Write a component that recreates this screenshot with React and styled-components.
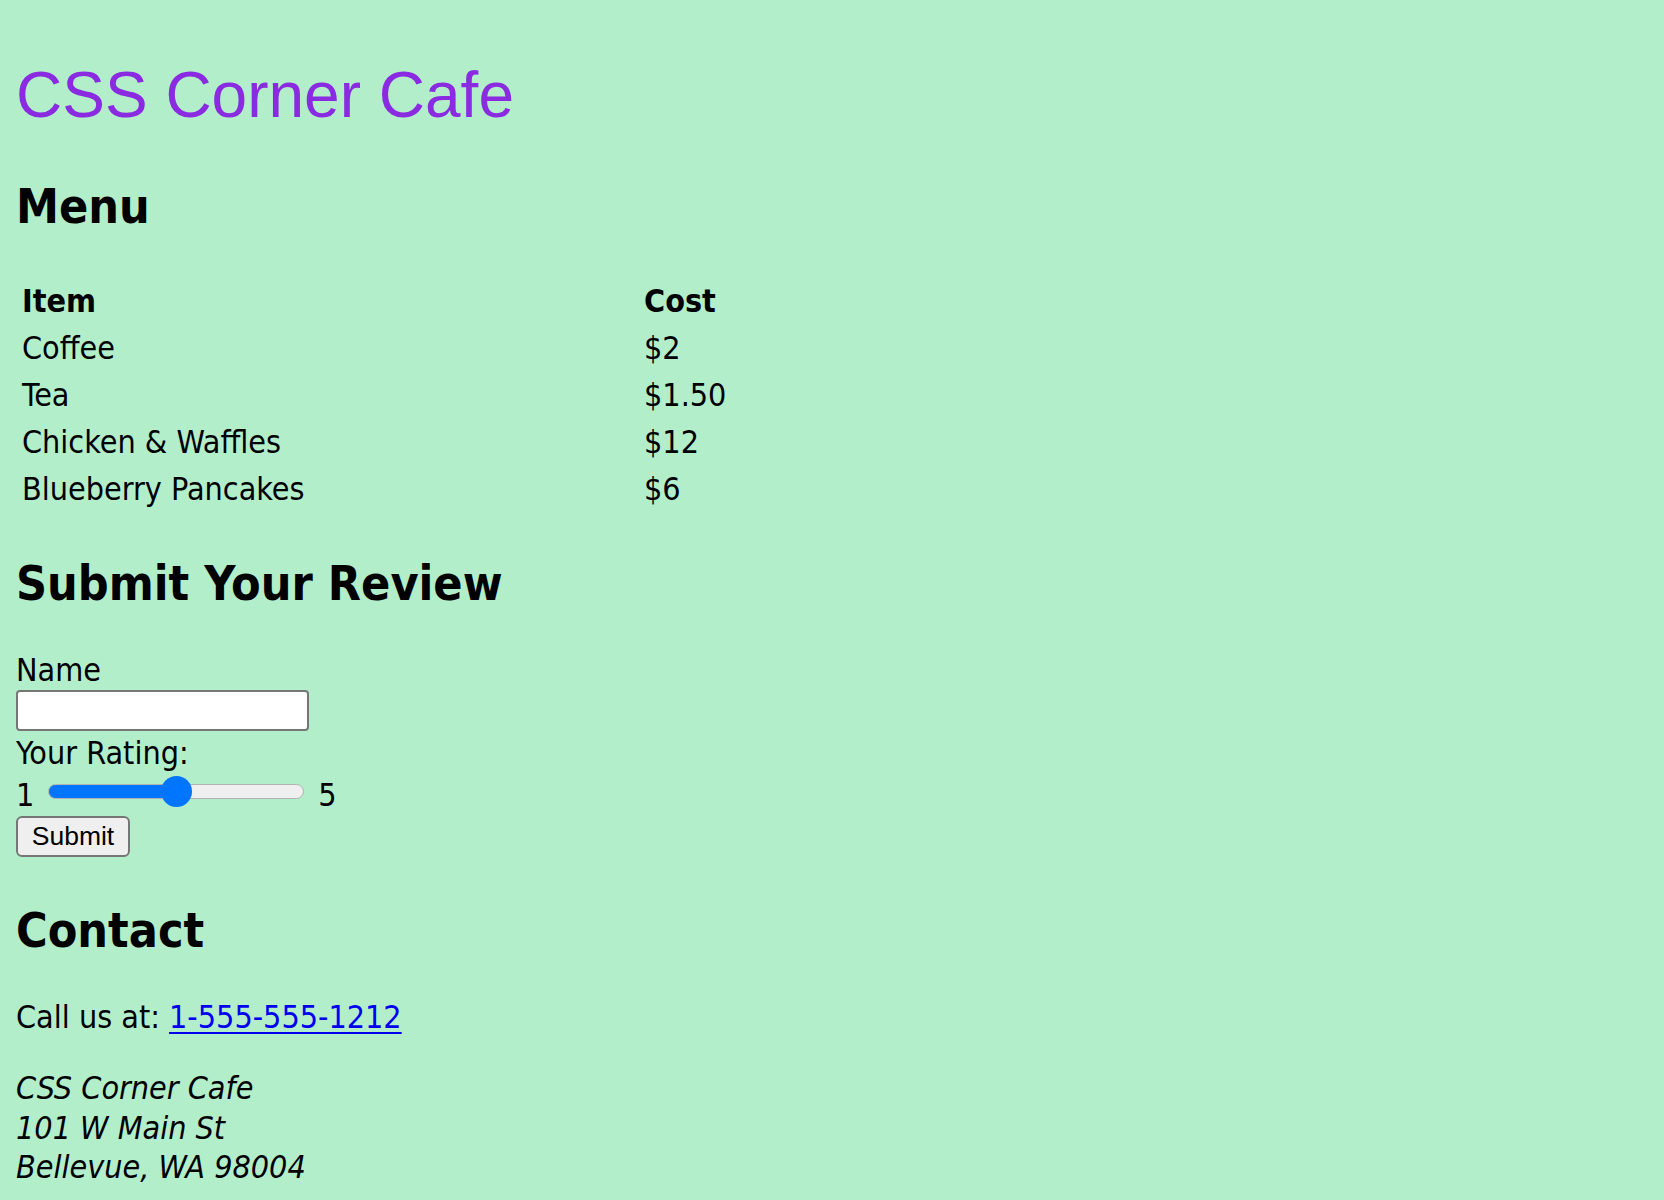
import React from 'react'
import styled, { createGlobalStyle } from 'styled-components';

const GlobalStyle = createGlobalStyle`
  html, body {
    margin: 0;
    background: #b3eecb;
  }
  body {
    min-height: 100vh;
  }
`;

const Page = styled.main`
  padding: 1px 16px 0;
  font-family: "DejaVu Sans Condensed", "DejaVu Sans", sans-serif;
  font-size: 32px;
  line-height: 39.5px;
  color: #000;
`;

const Title = styled.h1`
  margin: 58px 0 0;
  font: 400 64px/73.5px "Liberation Sans", Arial, sans-serif;
  color: #8a2be2;
`;

const Heading = styled.h2`
  margin: ${({ $top }) => $top}px 0 0;
  font-size: 48px;
  line-height: 58px;
  font-weight: 700;
`;

const MenuTable = styled.div`
  display: grid;
  grid-template-columns: 622px auto;
  justify-content: start;
  margin-top: 43px;
  padding-left: 6px;
  line-height: 47px;
`;

const Cell = styled.div`
  font-weight: ${({ $head }) => ($head ? 700 : 400)};
  white-space: nowrap;
`;

const Form = styled.form`
  margin-top: 39px;
`;

const Label = styled.label`
  display: block;
  margin-top: ${({ $top }) => $top || 0}px;
`;

const TextInput = styled.input`
  display: block;
  box-sizing: border-box;
  width: 293px;
  height: 41px;
  margin: 0;
  border: 2px solid #767676;
  border-radius: 4px;
  background: #fff;
  font: 26px "Liberation Sans", Arial, sans-serif;
  padding: 2px 4px;
`;

const SliderRow = styled.div`
  display: flex;
  align-items: flex-start;
  height: 40px;
  margin-top: 3px;
`;

const Range = styled.input`
  -webkit-appearance: none;
  appearance: none;
  box-sizing: border-box;
  width: 256px;
  height: 15px;
  margin: 8px 14px 0 14px;
  border-radius: 8px;
  border: 1.5px solid #b2b2b2;
  background: linear-gradient(to right, #0075ff 0 50%, #efefef 50% 100%);
  &::-webkit-slider-thumb {
    -webkit-appearance: none;
    appearance: none;
    width: 31px;
    height: 31px;
    border-radius: 50%;
    background: #0075ff;
    border: none;
  }
`;

const SubmitButton = styled.button`
  display: block;
  box-sizing: border-box;
  width: 114px;
  height: 41px;
  margin: 0;
  padding: 0;
  background: #efefef;
  border: 2px solid #767676;
  border-radius: 6px;
  font: 26.5px "Liberation Sans", Arial, sans-serif;
  color: #000;
`;

const Para = styled.p`
  margin: ${({ $top }) => $top}px 0 0;
`;

const Phone = styled.a`
  color: #0000ee;
  text-decoration: underline;
  text-decoration-thickness: 2px;
  text-underline-offset: 4px;
`;

const Address = styled.address`
  margin-top: 31.5px;
  font-style: italic;
`;

const menu = [
  { item: 'Coffee', cost: '$2' },
  { item: 'Tea', cost: '$1.50' },
  { item: 'Chicken & Waffles', cost: '$12' },
  { item: 'Blueberry Pancakes', cost: '$6' },
];

const App = () => {
  return (
    <>
      <GlobalStyle />
      <Page>
        <Title>CSS Corner Cafe</Title>

        <Heading $top={44}>Menu</Heading>
        <MenuTable>
          <Cell $head>Item</Cell>
          <Cell $head>Cost</Cell>
          {menu.map((row, i) => (
            <React.Fragment key={i}>
              <Cell>{row.item}</Cell>
              <Cell>{row.cost}</Cell>
            </React.Fragment>
          ))}
        </MenuTable>

        <Heading $top={41}>Submit Your Review</Heading>
        <Form onSubmit={(e) => e.preventDefault()}>
          <Label htmlFor="name">Name</Label>
          <TextInput id="name" type="text" />
          <Label htmlFor="rating" $top={2.5}>Your Rating:</Label>
          <SliderRow>
            <span>1</span>
            <Range id="rating" type="range" min="1" max="5" defaultValue="3" />
            <span>5</span>
          </SliderRow>
          <SubmitButton type="submit">Submit</SubmitButton>
        </Form>

        <Heading $top={44}>Contact</Heading>
        <Para $top={39}>
          Call us at: <Phone href="tel:1-555-555-1212">1-555-555-1212</Phone>
        </Para>
        <Address>
          CSS Corner Cafe<br />
          101 W Main St<br />
          Bellevue, WA 98004
        </Address>
      </Page>
    </>
  )
}

export default App
